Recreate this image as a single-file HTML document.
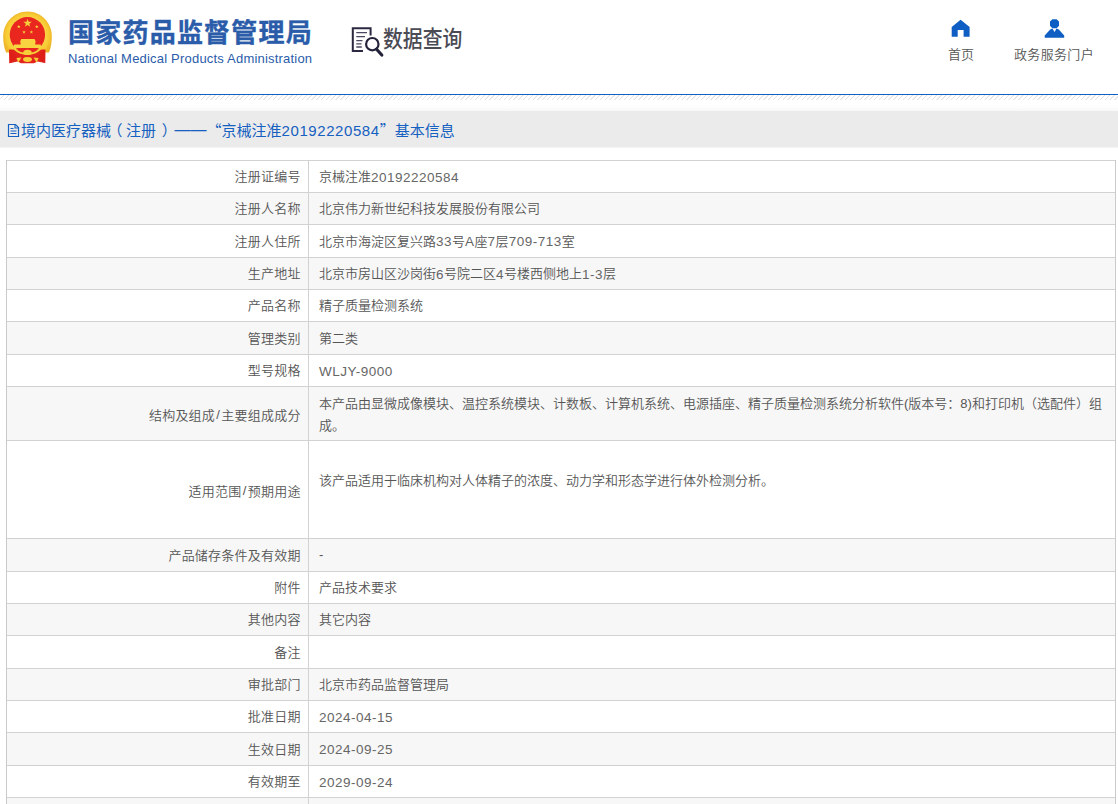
<!DOCTYPE html>
<html lang="zh-CN">
<head>
<meta charset="utf-8">
<title>国家药品监督管理局 数据查询</title>
<style>
*{box-sizing:border-box;margin:0;padding:0}
html,body{width:1118px;height:804px;overflow:hidden;background:#fff}
body{position:relative;font-family:"Liberation Sans","Noto Sans CJK SC",sans-serif;font-size:13px;color:#555;font-weight:350}
.abs{position:absolute}
#cn{left:68.1px;top:14px;font-size:26px;font-weight:700;color:#2a5caa;-webkit-text-stroke:.35px #2a5caa;line-height:38px;white-space:nowrap;letter-spacing:1.2px}
#en{left:68px;top:49.6px;font-size:13px;font-weight:400;color:#2a5caa;line-height:18px;white-space:nowrap;letter-spacing:.2px}
#stext{left:383px;top:22.4px;font-size:23px;line-height:34px;color:#4b4b55;font-weight:500;white-space:nowrap;transform-origin:0 0;transform:scaleX(.862)}
.nav{top:47px;width:120px;text-align:center;font-size:13px;line-height:16px;color:#555;white-space:nowrap}
#blueline{left:0;top:94px;width:1118px;height:1px;background:#1160c2}
#hatch{left:0;top:95px;width:1118px;height:5px;background:repeating-linear-gradient(135deg,#fff 0,#fff 2.2px,#e2e2e2 2.5px,#e2e2e2 3.1px,#fff 3.4px)}
#fade{left:0;top:100px;width:1118px;height:11px;background:linear-gradient(#fff 45%,#f8f8f8)}
#bar{left:0;top:111px;width:1118px;height:37px;background:linear-gradient(#ebebeb 36px,#f4f4f6 36px)}
#title{left:21px;top:120px;font-size:15px;line-height:20px;color:#1560c0;white-space:nowrap;font-weight:400}
#tbl{left:6px;top:160px;width:1110px;border-left:1px solid #cbcaca;border-right:1px solid #cbcaca}
.r{position:relative;border-top:1px solid #d3d2d2;display:flex;width:100%}
.r.g{background:#f7f7f7}
.l{width:302px;border-right:1px solid #d3d2d2;text-align:right;padding-right:7.4px;letter-spacing:.22px;padding-bottom:2px;display:flex;align-items:center;justify-content:flex-end;white-space:nowrap}
.v{flex:1;padding-left:10px;padding-right:4px;padding-bottom:2px;display:flex;align-items:center}
.n{color:#666;font-size:13.5px;letter-spacing:.5px;position:relative;top:1.5px}
.q{font-family:"Noto Sans CJK SC",sans-serif;display:inline-block;width:15px}
.ds{font-family:"Liberation Sans",sans-serif;display:inline-block;width:35.5px;text-align:right;font-size:16px;line-height:20px;vertical-align:top}
.tn{letter-spacing:.57px}
.sl{padding:0 1.2px}
.pl{position:relative;left:-3.5px}
.pr{position:relative;left:5.6px}
</style>
</head>
<body>
<svg id="emblem" class="abs" style="left:0;top:0;width:60px;height:70px" viewBox="0 0 60 70">
<defs><radialGradient id="gg" gradientUnits="userSpaceOnUse" cx="27.5" cy="35.5" r="24.6"><stop offset="0.72" stop-color="#f8d444"/><stop offset="0.86" stop-color="#f8cc34"/><stop offset="1" stop-color="#eeb528"/></radialGradient>
<clipPath id="cb"><rect x="0" y="44" width="60" height="20"/></clipPath></defs>
<path d="M27.5 11.4 C14 11.4 3.2 22.5 3.2 36.3 C3.2 42 4 47.5 6 52.6 L49 52.6 C51 47.5 51.8 42 51.8 36.3 C51.8 22.5 41 11.4 27.5 11.4 Z" fill="url(#gg)"/>
<path d="M9 49.4 L45.4 49.4 L45.2 63 L37.4 61.4 L34 63.2 L21 63.2 L17.6 61.4 L9.4 63.2 Z" fill="#e2241c"/>
<circle cx="27.4" cy="34.8" r="17.7" fill="#e9271f"/>
<circle cx="27.4" cy="34.8" r="19.2" fill="none" stroke="#f6cf38" stroke-width="1.7" clip-path="url(#cb)"/>
<polygon points="27.60,18.70 28.66,21.74 31.88,21.81 29.31,23.76 30.25,26.84 27.60,25.00 24.95,26.84 25.89,23.76 23.32,21.81 26.54,21.74" fill="#f6d03a"/>
<polygon points="18.80,24.80 19.25,26.09 20.61,26.11 19.52,26.93 19.92,28.24 18.80,27.46 17.68,28.24 18.08,26.93 16.99,26.11 18.35,26.09" fill="#f6d03a"/><polygon points="36.80,24.80 37.25,26.09 38.61,26.11 37.52,26.93 37.92,28.24 36.80,27.46 35.68,28.24 36.08,26.93 34.99,26.11 36.35,26.09" fill="#f6d03a"/><polygon points="24.00,30.20 24.45,31.49 25.81,31.51 24.72,32.33 25.12,33.64 24.00,32.86 22.88,33.64 23.28,32.33 22.19,31.51 23.55,31.49" fill="#f6d03a"/><polygon points="31.40,30.20 31.85,31.49 33.21,31.51 32.12,32.33 32.52,33.64 31.40,32.86 30.28,33.64 30.68,32.33 29.59,31.51 30.95,31.49" fill="#f6d03a"/>
<path d="M21.3 39 L34.5 39 L35.6 41.2 L35.1 44.6 L40.6 44.6 L41.4 48.1 L13.4 48.1 L14.2 44.6 L20.7 44.6 L20.2 41.2 Z" fill="#f8d440"/>
<ellipse cx="27.5" cy="52.4" rx="4.2" ry="2.6" fill="#f6cf38"/>
<ellipse cx="27.5" cy="59.5" rx="4.4" ry="2.4" fill="#f6cf38"/>
<path d="M16.4 58 L21.5 57.6 L18.4 62.4 Z M38.6 58 L33.5 57.6 L36.6 62.4 Z" fill="#f6cf38"/>
<path d="M9.2 50 L12 50 L17 57 L12 62.6 L9.4 63.2 Z M45.3 50 L43 50 L38 57 L43 62.4 L45.2 63 Z" fill="#d81c14" opacity=".55"/>
</svg>
<div id="cn" class="abs">国家药品监督管理局</div>
<div id="en" class="abs">National Medical Products Administration</div>
<svg id="sicon" class="abs" style="left:345px;top:20px;width:45px;height:42px" viewBox="345 20 45 42" fill="none">
<path d="M363 51 L352.8 51 L352.8 28.2 L370.6 28.2 L370.6 35.5" stroke="#2b2940" stroke-width="2"/>
<path d="M356.3 32.6H367 M356.3 36.6H365 M356.3 40.6H362.5 M356.3 43.8H361.5 M356.3 47H361.8" stroke="#4a4960" stroke-width="1.3"/>
<circle cx="372.3" cy="44.2" r="6.2" stroke="#25233a" stroke-width="2.2"/>
<path d="M376.6 49.2 L381.8 55" stroke="#25233a" stroke-width="3.2" stroke-linecap="round"/>
</svg>
<div id="stext" class="abs">数据查询</div>
<svg id="home" class="abs" style="left:945px;top:15px;width:30px;height:26px" viewBox="945 15 30 26">
<path d="M960.6 19.8 L969.6 27 L969.6 36.7 L963.6 36.7 L963.6 30 L957.7 30 L957.7 36.7 L951.7 36.7 L951.7 27 Z" fill="#0f5ec4"/>
</svg>
<svg id="user" class="abs" style="left:1040px;top:15px;width:30px;height:26px" viewBox="1040 15 30 26">
<path d="M1052.4 19.2 L1056.6 19.2 L1059 21.6 L1059 25.8 L1056.6 28.2 L1052.4 28.2 L1050 25.8 L1050 21.6 Z" fill="#0f5ec4"/>
<path d="M1044.7 37.8 L1044.7 35.5 L1050.2 29.4 L1052.4 28.6 L1054.5 32 L1056.6 28.6 L1058.8 29.4 L1064.2 35.5 L1064.2 37.8 Z" fill="#0f5ec4"/>
</svg>
<div class="abs nav" style="left:901px">首页</div>
<div class="abs nav" style="left:994px;letter-spacing:.35px">政务服务门户</div>
<div id="blueline" class="abs"></div>
<div id="hatch" class="abs"></div>
<div id="fade" class="abs"></div>
<div id="bar" class="abs"></div>
<svg id="docicon" class="abs" style="left:5px;top:121px;width:18px;height:18px" viewBox="5 121 18 18" fill="none">
<path d="M8.5 124.5 L15.5 124.5 L18.5 127.5 L18.5 136.5 L8.5 136.5 Z" stroke="#1560c0" stroke-width="1.2"/>
<path d="M15 124.5 L15 128 L18.5 128 M10.5 128.5H13.5 M10.5 131H16.5 M10.5 133.5H16.5" stroke="#1560c0" stroke-width="1.1"/>
</svg>
<div id="title" class="abs">境内医疗器械<span class="pl">（</span>注册<span class="pr">）</span><span class="ds">——</span><span class="q">“</span>京械注准<span class="tn">20192220584</span><span class="q">”</span>基本信息</div>
<div id="tbl" class="abs">
<div class="r" style="height:32px"><div class="l">注册证编号</div><div class="v">京械注准<span class="n">20192220584</span></div></div>
<div class="r g" style="height:32px"><div class="l">注册人名称</div><div class="v">北京伟力新世纪科技发展股份有限公司</div></div>
<div class="r" style="height:33px"><div class="l">注册人住所</div><div class="v">北京市海淀区复兴路<span class="n">33</span>号<span class="n">A</span>座<span class="n">7</span>层<span class="n">709-713</span>室</div></div>
<div class="r g" style="height:32px"><div class="l">生产地址</div><div class="v">北京市房山区沙岗街<span class="n">6</span>号院二区<span class="n">4</span>号楼西侧地上<span class="n">1-3</span>层</div></div>
<div class="r" style="height:32px"><div class="l">产品名称</div><div class="v">精子质量检测系统</div></div>
<div class="r g" style="height:33px"><div class="l">管理类别</div><div class="v">第二类</div></div>
<div class="r" style="height:32px"><div class="l">型号规格</div><div class="v"><span class="n">WLJY-9000</span></div></div>
<div class="r g" style="height:54px"><div class="l" style="padding-bottom:0;padding-top:1px">结构及组成<span class="sl">/</span>主要组成成分</div><div class="v" style="line-height:22.5px;padding-bottom:0;padding-top:3px">本产品由显微成像模块、温控系统模块、计数板、计算机系统、电源插座、精子质量检测系统分析软件(版本号：8)和打印机（选配件）组成。</div></div>
<div class="r" style="height:98px"><div class="l" style="padding-bottom:0;padding-top:1px">适用范围<span class="sl">/</span>预期用途</div><div class="v" style="align-items:flex-start;padding-top:29.5px;line-height:20px">该产品适用于临床机构对人体精子的浓度、动力学和形态学进行体外检测分析。</div></div>
<div class="r g" style="height:33px"><div class="l">产品储存条件及有效期</div><div class="v">-</div></div>
<div class="r" style="height:32px"><div class="l">附件</div><div class="v">产品技术要求</div></div>
<div class="r g" style="height:32px"><div class="l">其他内容</div><div class="v">其它内容</div></div>
<div class="r" style="height:33px"><div class="l">备注</div><div class="v"></div></div>
<div class="r g" style="height:32px"><div class="l">审批部门</div><div class="v">北京市药品监督管理局</div></div>
<div class="r" style="height:32px"><div class="l">批准日期</div><div class="v"><span class="n">2024-04-15</span></div></div>
<div class="r g" style="height:33px"><div class="l">生效日期</div><div class="v"><span class="n">2024-09-25</span></div></div>
<div class="r" style="height:32px"><div class="l">有效期至</div><div class="v"><span class="n">2029-09-24</span></div></div>
<div class="r g" style="height:33px"><div class="l"></div><div class="v"></div></div>
</div>
</body>
</html>
